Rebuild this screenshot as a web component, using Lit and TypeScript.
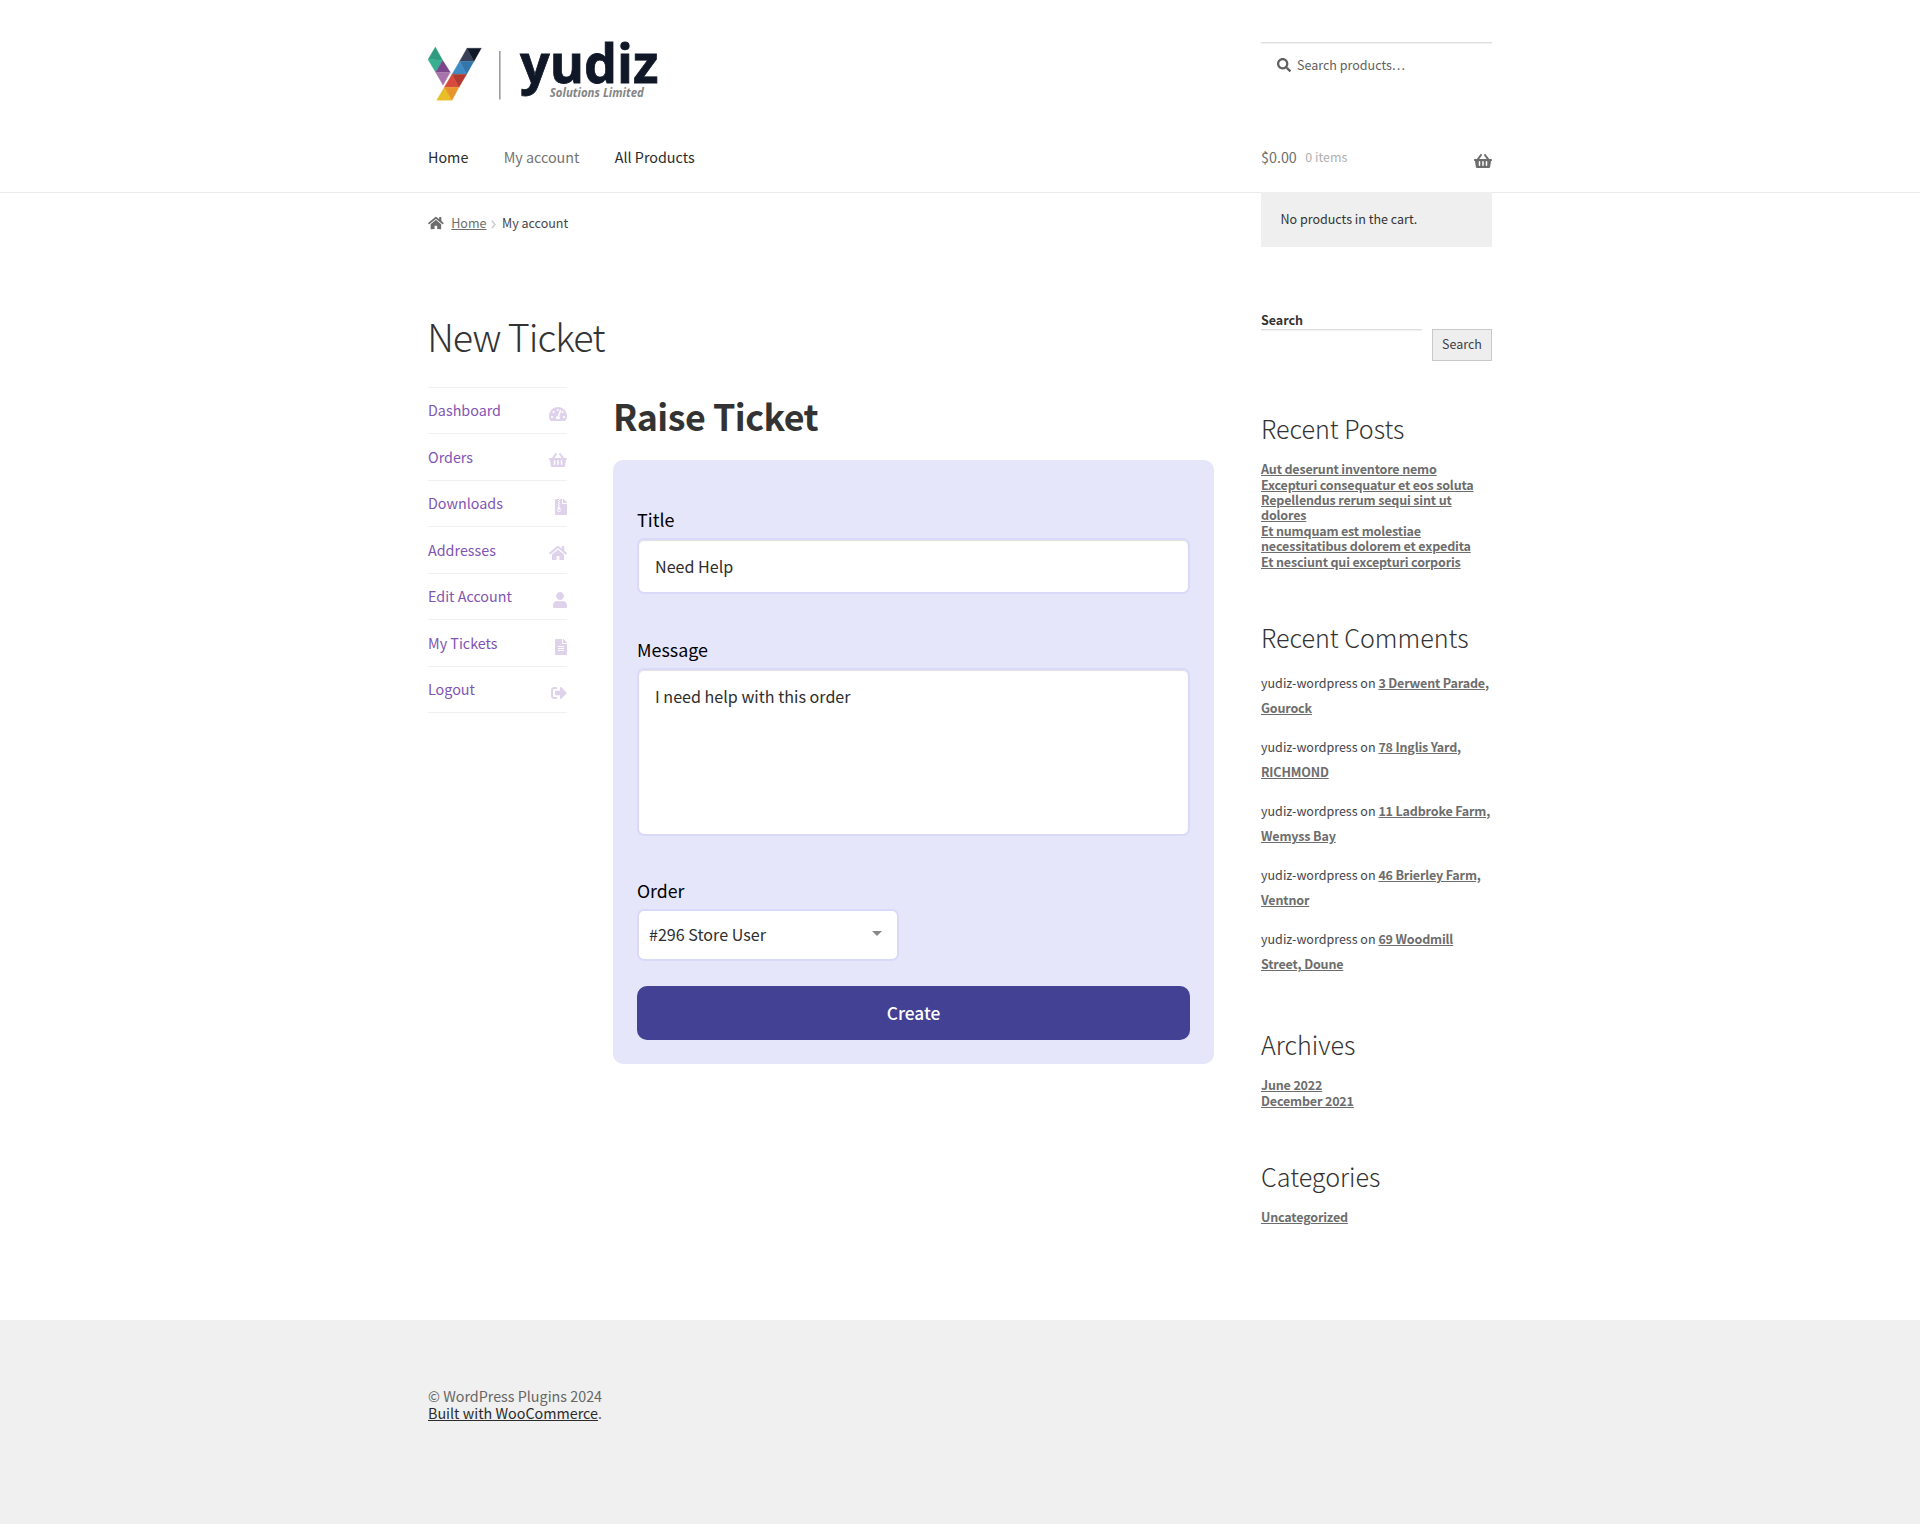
import { LitElement, html, css, svg } from "lit";
import { customElement, property, state } from "lit/decorators.js";

const ICONS: Record<string, [number, string]> = {
  search: [512, "M505 442.7L405.3 343c-4.5-4.5-10.6-7-17-7H372c27.6-35.3 44-79.7 44-128C416 93.1 322.9 0 208 0S0 93.1 0 208s93.1 208 208 208c48.3 0 92.7-16.4 128-44v16.3c0 6.4 2.5 12.5 7 17l99.7 99.7c9.4 9.4 24.6 9.4 33.9 0l28.3-28.3c9.4-9.4 9.4-24.6.1-34zM208 336c-70.7 0-128-57.2-128-128 0-70.7 57.2-128 128-128 70.7 0 128 57.2 128 128 0 70.7-57.2 128-128 128z"],
  basket: [576, "M576 216v16c0 13.255-10.745 24-24 24h-8l-26.113 182.788C514.509 462.435 494.257 480 470.37 480H105.63c-23.887 0-44.139-17.565-47.518-41.212L32 256h-8c-13.255 0-24-10.745-24-24v-16c0-13.255 10.745-24 24-24h67.341l106.78-146.821c10.395-14.292 30.407-17.453 44.701-7.058 14.293 10.395 17.453 30.408 7.058 44.701L170.477 192h235.046L326.12 82.821c-10.395-14.292-7.234-34.306 7.059-44.701 14.291-10.395 34.306-7.235 44.701 7.058L484.659 192H552c13.255 0 24 10.745 24 24zM312 392V280c0-13.255-10.745-24-24-24s-24 10.745-24 24v112c0 13.255 10.745 24 24 24s24-10.745 24-24zm112 0V280c0-13.255-10.745-24-24-24s-24 10.745-24 24v112c0 13.255 10.745 24 24 24s24-10.745 24-24zm-224 0V280c0-13.255-10.745-24-24-24s-24 10.745-24 24v112c0 13.255 10.745 24 24 24s24-10.745 24-24z"],
  home: [576, "M280.37 148.26L96 300.11V464a16 16 0 0 0 16 16l112.06-.29a16 16 0 0 0 15.92-16V368a16 16 0 0 1 16-16h64a16 16 0 0 1 16 16v95.64a16 16 0 0 0 16 16.05L464 480a16 16 0 0 0 16-16V300L295.67 148.26a12.19 12.19 0 0 0-15.3 0zM571.6 251.47L488 182.56V44.05a12 12 0 0 0-12-12h-56a12 12 0 0 0-12 12v72.61L318.47 43a48 48 0 0 0-61 0L4.34 251.47a12 12 0 0 0-1.6 16.9l25.5 31A12 12 0 0 0 45.15 301l235.22-193.74a12.19 12.19 0 0 1 15.3 0L530.9 301a12 12 0 0 0 16.9-1.6l25.5-31a12 12 0 0 0-1.7-16.93z"],
  gauge: [576, "M288 32C128.94 32 0 160.94 0 320c0 52.8 14.25 102.26 39.06 144.8 5.61 9.62 16.3 15.2 27.44 15.2h443c11.14 0 21.83-5.58 27.44-15.2C561.75 422.26 576 372.8 576 320c0-159.06-128.94-288-288-288zm0 64c14.71 0 26.58 10.13 30.32 23.65-1.11 2.26-2.64 4.23-3.45 6.67l-9.22 27.67c-5.13 3.49-10.97 6.01-17.64 6.01-17.67 0-32-14.33-32-32S270.33 96 288 96zM96 384c-17.67 0-32-14.33-32-32s14.33-32 32-32 32 14.33 32 32-14.33 32-32 32zm48-160c-17.67 0-32-14.33-32-32s14.33-32 32-32 32 14.33 32 32-14.33 32-32 32zm246.77-72.41l-61.33 184C343.13 347.33 352 364.54 352 384c0 11.72-3.38 22.55-8.88 32H232.88c-5.5-9.45-8.88-20.28-8.88-32 0-33.94 26.5-61.43 59.9-63.59l61.34-184.01c4.17-12.56 17.73-19.45 30.36-15.17 12.57 4.19 19.35 17.79 15.17 30.36zm14.66 57.2l15.52-46.55c3.47-1.29 7.13-2.23 11.05-2.23 17.67 0 32 14.33 32 32s-14.33 32-32 32c-11.38-.01-20.89-6.28-26.57-15.22zM480 384c-17.67 0-32-14.33-32-32s14.33-32 32-32 32 14.33 32 32-14.33 32-32 32z"],
  archive: [384, "M377 105L279.1 7c-4.5-4.5-10.6-7-17-7H256v128h128v-6.1c0-6.3-2.5-12.4-7-16.9zM128.4 336c-17.9 0-32.4 12.1-32.4 27 0 15 14.6 27 32.5 27s32.4-12.1 32.4-27-14.6-27-32.5-27zM224 136V0h-63.6v32h-32V0H24C10.7 0 0 10.7 0 24v464c0 13.3 10.7 24 24 24h336c13.3 0 24-10.7 24-24V160H248c-13.2 0-24-10.8-24-24zM95.9 32h32v32h-32zm32.3 384c-33.2 0-58-30.4-51.4-62.9L96.4 256v-32h32v-32h-32v-32h32v-32h-32V96h32V64h32v32h-32v32h32v32h-32v32h32v32h-32v32h22.1c5.7 0 10.7 4.1 11.8 9.7l17.3 87.7c6.4 32.4-18.4 62.6-51.4 62.6z"],
  user: [448, "M224 256c70.7 0 128-57.3 128-128S294.7 0 224 0 96 57.3 96 128s57.3 128 128 128zm89.6 32h-16.7c-22.2 10.2-46.9 16-72.9 16s-50.6-5.8-72.9-16h-16.7C60.2 288 0 348.2 0 422.4V464c0 26.5 21.5 48 48 48h352c26.5 0 48-21.5 48-48v-41.6c0-74.2-60.2-134.4-134.4-134.4z"],
  file: [384, "M224 136V0H24C10.7 0 0 10.7 0 24v464c0 13.3 10.7 24 24 24h336c13.3 0 24-10.7 24-24V160H248c-13.2 0-24-10.8-24-24zm64 236c0 6.6-5.4 12-12 12H108c-6.6 0-12-5.4-12-12v-8c0-6.6 5.4-12 12-12h168c6.6 0 12 5.4 12 12v8zm0-64c0 6.6-5.4 12-12 12H108c-6.6 0-12-5.4-12-12v-8c0-6.6 5.4-12 12-12h168c6.6 0 12 5.4 12 12v8zm0-72v8c0 6.6-5.4 12-12 12H108c-6.6 0-12-5.4-12-12v-8c0-6.6 5.4-12 12-12h168c6.6 0 12 5.4 12 12zm96-114.1v6.1H256V0h6.1c6.4 0 12.5 2.5 17 7l97.9 98c4.5 4.5 7 10.6 7 16.9z"],
  logout: [512, "M497 273L329 441c-15 15-41 4.5-41-17v-96H152c-13.3 0-24-10.7-24-24v-96c0-13.3 10.7-24 24-24h136V88c0-21.4 25.9-32 41-17l168 168c9.3 9.4 9.3 24.6 0 34zM192 436v-40c0-6.6-5.4-12-12-12H96c-17.7 0-32-14.3-32-32V160c0-17.7 14.3-32 32-32h84c6.6 0 12-5.4 12-12V76c0-6.6-5.4-12-12-12H96c-53 0-96 43-96 96v192c0 53 43 96 96 96h84c6.6 0 12-5.4 12-12z"],
};

@customElement("ui-icon")
class UiIcon extends LitElement {
  @property() name = "home";
  @property({ type: Number }) size = 16;
  static styles = css`
    :host { display: block; flex: none; }
    .glyph { display: block; fill: currentColor; }
  `;
  render() {
    const [w, d] = ICONS[this.name];
    return html`<svg class="glyph" width=${(this.size * w) / 512} height=${this.size} viewBox="0 0 ${w} 512"><path d=${d}></path></svg>`;
  }
}

const LOGO_FACETS: [string, string][] = [
  ["#2f9b80", "22,0 0,38 44,40"],
  ["#38b08f", "0,38 44,40 23,76"],
  ["#7b468c", "44,40 23,76 67,76"],
  ["#a673aa", "23,76 67,76 45,115"],
  ["#3a4057", "117,4 138,43 95,43"],
  ["#101828", "117,4 160,4 138,43"],
  ["#3f8cc4", "95,43 116,82 72,82"],
  ["#3276ab", "95,43 138,43 116,82"],
  ["#d84b3c", "72,82 93,121 49,121"],
  ["#b03a30", "72,82 116,82 93,121"],
  ["#e9bd26", "49,121 72,160 26,160"],
  ["#e8952c", "49,121 93,121 72,160"],
];

@customElement("site-logo")
class SiteLogo extends LitElement {
  static styles = css`
    :host { display: flow-root; height: 62px; }
    .art { display: block; margin-top: -20px; }
    .word { font: 700 54px "Open Sans", "Noto Sans", sans-serif; fill: #101828; stroke: #101828; stroke-width: 0.8px; }
    .tag { font: italic 700 12px "Open Sans", "Noto Sans", sans-serif; fill: #858585; }
  `;
  render() {
    return html`<svg class="art" width="240" height="102" viewBox="0 -20 240 102">
      <g transform="translate(0 4.9) scale(.3333)">
        ${LOGO_FACETS.map(([c, p]) => svg`<polygon points=${p} fill=${c} stroke=${c} stroke-width="1"></polygon>`)}
      </g>
      <rect x="71" y="9" width="1.6" height="48.5" fill="#9a9ea6"></rect>
      <text class="word" x="92" y="41.3" textLength="138.5" lengthAdjust="spacingAndGlyphs">yudiz</text>
      <text class="tag" x="121.8" y="55" textLength="94" lengthAdjust="spacingAndGlyphs">Solutions Limited</text>
    </svg>`;
  }
}

@customElement("app-root")
class AppRoot extends LitElement {
  @state() subject = "Need Help";
  @state() message = "I need help with this order";

  private menu: [string, string][] = [
    ["Dashboard", "gauge"],
    ["Orders", "basket"],
    ["Downloads", "archive"],
    ["Addresses", "home"],
    ["Edit Account", "user"],
    ["My Tickets", "file"],
    ["Logout", "logout"],
  ];
  private posts = [
    "Aut deserunt inventore nemo",
    "Excepturi consequatur et eos soluta",
    "Repellendus rerum sequi sint ut dolores",
    "Et numquam est molestiae necessitatibus dolorem et expedita",
    "Et nesciunt qui excepturi corporis",
  ];
  private comments = [
    "3 Derwent Parade, Gourock",
    "78 Inglis Yard, RICHMOND",
    "11 Ladbroke Farm, Wemyss Bay",
    "46 Brierley Farm, Ventnor",
    "69 Woodmill Street, Doune",
  ];

  static styles = css`
    :host {
      display: block;
      min-height: 1525px;
      background: #fff;
      color: #43454b;
      font-family: "Noto Sans CJK SC", "Noto Sans CJK JP", "Noto Sans", sans-serif;
      font-size: 14.33px;
    }
    * { box-sizing: border-box; }
    ul { list-style: none; margin: 0; padding: 0; }
    h1, h2, h3, p { margin: 0; }
    .wrap { width: 1064px; margin: 0 auto; display: flex; justify-content: space-between; }
    .small { font-size: 12.53px; }
    .side { width: 231px; flex: none; }

    .header { height: 193px; border-bottom: 1px solid #ebebeb; }
    .brand { padding-top: 42px; }
    .nav { display: flex; gap: 35.3px; margin-top: 38px; line-height: 30px; color: #2b2b2b; }
    .current { color: #737373; }
    .searchbox {
      display: flex; align-items: center; gap: 6px; height: 45px; margin-top: 42px; padding: 0 16px;
      color: #5f5f5f; border-top: 1px solid #dedede; box-shadow: inset 0 1px 1px rgba(0, 0, 0, 0.06);
      line-height: 43px;
    }
    .searchbox span { height: 45px; }
    .cart { position: relative; display: flex; align-items: center; height: 30px; margin-top: 54px; color: #6d6d6d; }
    .count { margin: 1px 0 0 8.5px; color: #b0b0b0; }
    .bag { margin: 9px 0 0 auto; }
    .minicart {
      position: absolute; left: 0; top: 51px; width: 231px; height: 55px; padding-left: 19.5px;
      background: #efefef; color: #333; line-height: 53px;
    }

    .crumbs { height: 59px; margin-bottom: 1px; justify-content: flex-start; align-items: center; line-height: 20px; }
    .crumbs ui-icon { color: #6d6d6d; }
    .crumbs a { margin-left: 7.5px; color: #6d6d6d; text-decoration: underline; }
    .chev { margin: 3px 5.5px 0 5px; }

    .content { height: 1067px; }
    .primary { width: 786px; }
    .page-title { margin: 53px 0 0 -0.8px; line-height: 60px; height: 60px; font-size: 37.7px; font-weight: 300; letter-spacing: -1px; color: #333; }
    .columns { display: flex; justify-content: space-between; margin-top: 20.5px; }
    .menu { width: 139px; border-top: 1px solid #f0f0f0; }
    .menu li {
      display: flex; justify-content: space-between; align-items: center; height: 46.57px; padding-bottom: 0.6px;
      border-bottom: 1px solid #f0f0f0; color: #7f54b3; line-height: 24px;
    }
    .menu ui-icon { margin-top: 7.6px; opacity: 0.25; }
    .ticket { width: 601px; }
    .ticket-title { font-size: 35.8px; line-height: 56px; font-weight: 700; letter-spacing: -0.48px; color: #333; }
    .panel {
      display: flex; flex-direction: column; height: 604px; margin-top: 17.5px; padding: 46px 24px 24px;
      background: #e6e6fa; border-radius: 10px;
    }
    .label { display: block; height: 32px; line-height: 26px; font-size: 17.9px; color: #000; }
    .label.order { line-height: 27px; font-size: 17.7px; }
    .control {
      display: block; width: 100%; border: 2px solid #d9d9fa; border-radius: 7px; background: #fff; color: #2e2e2e;
      font-family: inherit; font-size: 16.1px; line-height: 26px; outline: none; resize: none;
      box-shadow: inset 0 1px 1px rgba(0, 0, 0, 0.125);
    }
    .line { height: 56px; padding: 0 16px; margin-bottom: 42px; }
    .area { height: 168px; padding: 12.6px 16px; margin-bottom: 41px; }
    .select { display: flex; justify-content: space-between; align-items: center; width: 262px; height: 52px; padding: 0 15px 1.5px 10px; margin-bottom: 25px; box-shadow: none; }
    .arrow { width: 0; height: 0; margin-top: -1px; border: 5px solid transparent; border-top-color: #888; border-bottom: 0; }
    .create { height: 54px; padding-bottom: 2px; border: 0; border-radius: 10px; background: #424193; color: #fff; font-family: inherit; font-size: 17.3px; font-weight: 500; }

    .widgets { padding-top: 57.5px; }
    .search-label { line-height: 18px; font-weight: 700; color: #333; letter-spacing: -0.05px; }
    .search-row { display: flex; justify-content: space-between; height: 32px; margin-top: 0.5px; margin-bottom: 50px; }
    .search-input { width: 161px; border-top: 1px solid #dedede; box-shadow: inset 0 1px 1px rgba(0, 0, 0, 0.06); }
    .search-btn { width: 60px; padding: 0 0 2px; border: 1px solid #c9c9c9; background: #eee; color: #3d3f45; font-family: inherit; font-size: 12.53px; line-height: 26px; }
    .widget { margin-bottom: 50.6px; }
    .widget-title { height: 36px; line-height: 35.2px; margin-bottom: 14.2px; font-size: 25.1px; font-weight: 300; color: #333; }
    .links { line-height: 15.4px; }
    .links a, .comments a { color: #6d6d6d; font-weight: 700; text-decoration: underline; letter-spacing: -0.165px; }
    .comments { line-height: 25.2px; }
    .comments li + li { margin-top: 13.7px; }

    .footer { height: 204px; padding-top: 66.5px; background: #f0f0f0; color: #666; line-height: 17px; }
    .footer .wrap { display: block; }
    .footer a { color: #2b2b2b; text-decoration: underline; }
  `;

  private linkWidget(title: string, items: string[]) {
    return html`<section class="widget">
      <h2 class="widget-title">${title}</h2>
      <ul class="links small">${items.map((t) => html`<li><a>${t}</a></li>`)}</ul>
    </section>`;
  }

  render() {
    return html`
      <header class="header">
        <div class="wrap">
          <div class="brand">
            <site-logo></site-logo>
            <nav class="nav"><span>Home</span><span class="current">My account</span><span>All Products</span></nav>
          </div>
          <div class="side">
            <div class="searchbox small"><ui-icon name="search" size="14"></ui-icon><span>Search products…</span></div>
            <div class="cart">
              <span>$0.00</span><span class="count small">0 items</span>
              <ui-icon class="bag" name="basket"></ui-icon>
              <div class="minicart small">No products in the cart.</div>
            </div>
          </div>
        </div>
      </header>
      <div class="wrap crumbs small">
        <ui-icon name="home" size="14"></ui-icon><a>Home</a>
        <svg class="chev" width="5" height="9" viewBox="0 0 5 9"><path d="M.8 .8L4 4.5L.8 8.2" fill="none" stroke="#ccc" stroke-width="1.5"></path></svg>
        <span>My account</span>
      </div>
      <div class="wrap content">
        <main class="primary">
          <h1 class="page-title">New Ticket</h1>
          <div class="columns">
            <ul class="menu">
              ${this.menu.map(([t, i]) => html`<li><span>${t}</span><ui-icon name=${i}></ui-icon></li>`)}
            </ul>
            <div class="ticket">
              <h2 class="ticket-title">Raise Ticket</h2>
              <div class="panel">
                <label class="label">Title</label>
                <input class="control line" .value=${this.subject} />
                <label class="label">Message</label>
                <textarea class="control area" .value=${this.message}></textarea>
                <label class="label order">Order</label>
                <div class="control select"><span>#296 Store User</span><span class="arrow"></span></div>
                <button class="create">Create</button>
              </div>
            </div>
          </div>
        </main>
        <aside class="side widgets">
          <div class="search-label small">Search</div>
          <div class="search-row"><div class="search-input"></div><button class="search-btn">Search</button></div>
          ${this.linkWidget("Recent Posts", this.posts)}
          <section class="widget">
            <h2 class="widget-title">Recent Comments</h2>
            <ul class="comments small">${this.comments.map((t) => html`<li>yudiz-wordpress on <a>${t}</a></li>`)}</ul>
          </section>
          ${this.linkWidget("Archives", ["June 2022", "December 2021"])}
          ${this.linkWidget("Categories", ["Uncategorized"])}
        </aside>
      </div>
      <footer class="footer">
        <div class="wrap"><p>© WordPress Plugins 2024</p><p><a>Built with WooCommerce</a>.</p></div>
      </footer>
    `;
  }
}
